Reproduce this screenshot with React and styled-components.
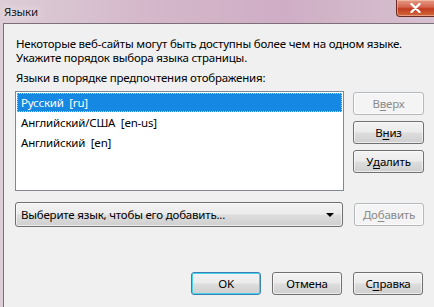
import React from 'react'
import styled, { createGlobalStyle } from 'styled-components'

const GlobalStyle = createGlobalStyle`
    html, body {
        margin: 0;
        padding: 0;
        overflow: hidden;
        background: #f0f0f0;
    }
`

const Window = styled.div`
    width: 434px;
    height: 307px;
    display: flex;
    flex-direction: column;
    background: linear-gradient(90deg, #dccdd6 0%, #d4b7ca 35%, #cfaec5 65%, #d6c0cf 100%);
    font-family: "Noto Sans", "Open Sans", sans-serif;
    font-size: 11.5px;
    letter-spacing: -0.2px;
    color: #000;
    overflow: hidden;
`

const TitleBar = styled.div`
    height: 23px;
    display: flex;
    align-items: flex-start;
    justify-content: space-between;
    flex-shrink: 0;
`

const Title = styled.span`
    margin: 4px 0 0 4px;
    font-size: 11.5px;
    color: #1a1a1a;
    text-shadow: 0 0 6px #efe6ec, 0 0 10px #efe6ec;
`

const CloseButton = styled.div`
    width: 42px;
    height: 17px;
    margin-right: -4px;
    flex-shrink: 0;
    border: 1px solid #6b2b22;
    border-top: none;
    border-radius: 0 0 4px 4px;
    background: linear-gradient(#e59c88 0%, #d4634a 45%, #c23a1f 55%, #d36a3e 100%);
    box-shadow: inset 0 0 0 1px rgba(255, 210, 190, 0.5);
    display: flex;
    align-items: center;
    justify-content: center;
    padding-right: 4px;
    box-sizing: border-box;
`

const Client = styled.div`
    flex: 1;
    margin-left: 3px;
    border-left: 1px solid #7d6f78;
    border-top: 1px solid #7d6f78;
    background: #f0f0f0;
    padding: 13px 10px 0 11px;
    display: flex;
    flex-direction: column;
`

const Description = styled.p`
    margin: 0 0 0 1px;
    line-height: 14px;
    white-space: nowrap;
`

const Label = styled.div`
    margin: 6px 0 0 1px;
    line-height: 14px;
`

const ListRow = styled.div`
    display: flex;
    gap: 9px;
    margin-top: 6px;
`

const ListBox = styled.div`
    width: 329px;
    height: 100px;
    flex-shrink: 0;
    box-sizing: border-box;
    border: 1px solid #828790;
    background: #fff;
    padding: 1px 1px 0;
    display: flex;
    flex-direction: column;
    gap: 1px;
`

const ListItem = styled.div`
    height: 19px;
    line-height: 19px;
    padding-left: 4px;
    white-space: pre;
    color: ${props => (props.selected ? '#fff' : '#000')};
    background: ${props => (props.selected ? '#1588e3' : 'transparent')};
    outline: ${props => (props.selected ? '1px dotted #a9d6ff' : 'none')};
    outline-offset: -1px;
`

const SideButtons = styled.div`
    display: flex;
    flex-direction: column;
    gap: 6px;
    padding-top: 1px;
`

const Button = styled.div`
    width: ${props => props.$width || 71}px;
    height: 23px;
    flex-shrink: 0;
    box-sizing: border-box;
    border: 1px solid ${props => (props.$disabled ? '#b5b9bc' : props.$primary ? '#3c7fb1' : '#707070')};
    border-radius: 3px;
    background: ${props => props.$disabled
        ? '#f4f4f4'
        : 'linear-gradient(#f3f3f3 0%, #ebebeb 48%, #dddddd 52%, #cfcfcf 100%)'};
    box-shadow: ${props => (props.$primary ? 'inset 0 0 0 1px #48d2ec' : 'inset 0 0 0 1px rgba(255,255,255,0.6)')};
    color: ${props => (props.$disabled ? '#8a8a8a' : '#000')};
    display: flex;
    align-items: center;
    justify-content: center;
    line-height: 1;
`

const Key = styled.span`
    text-decoration: underline;
    text-underline-offset: 2px;
`

const AddRow = styled.div`
    display: flex;
    align-items: center;
    gap: 11px;
    margin-top: 11px;
`

const Select = styled.div`
    width: 328px;
    height: 25px;
    flex-shrink: 0;
    box-sizing: border-box;
    border: 1px solid #707070;
    border-radius: 3px;
    background: linear-gradient(#f3f3f3 0%, #ebebeb 48%, #dddddd 52%, #cfcfcf 100%);
    box-shadow: inset 0 0 0 1px rgba(255,255,255,0.6);
    display: flex;
    align-items: center;
    justify-content: space-between;
    padding: 0 8px 0 5px;
`

const Arrow = styled.span`
    width: 0;
    height: 0;
    border-left: 4px solid transparent;
    border-right: 4px solid transparent;
    border-top: 4px solid #000;
`

const Footer = styled.div`
    display: flex;
    justify-content: flex-end;
    gap: 11px;
    margin-top: 45px;
    padding-right: 1px;
`

function App() {
    return (
        <Window>
            <GlobalStyle />
            <TitleBar>
                <Title>Языки</Title>
                <CloseButton>
                    <svg width="11" height="10" viewBox="0 0 11 10">
                        <path d="M1.5 1 L9.5 9 M9.5 1 L1.5 9" stroke="#fff" strokeWidth="2.4" strokeLinecap="round" />
                    </svg>
                </CloseButton>
            </TitleBar>
            <Client>
                <Description>
                    Некоторые веб-сайты могут быть доступны более чем на одном языке.
                    <br />
                    Укажите порядок выбора языка страницы.
                </Description>
                <Label>Языки в порядке предпочтения отображения:</Label>
                <ListRow>
                    <ListBox>
                        <ListItem selected>Русский  [ru]</ListItem>
                        <ListItem>Английский/США  [en-us]</ListItem>
                        <ListItem>Английский  [en]</ListItem>
                    </ListBox>
                    <SideButtons>
                        <Button $disabled>В<Key>в</Key>ерх</Button>
                        <Button>В<Key>н</Key>из</Button>
                        <Button>У<Key>д</Key>алить</Button>
                    </SideButtons>
                </ListRow>
                <AddRow>
                    <Select>
                        <span>Выберите язык, чтобы его добавить...</span>
                        <Arrow />
                    </Select>
                    <Button $disabled $width={70}>До<Key>б</Key>авить</Button>
                </AddRow>
                <Footer>
                    <Button $primary $width={70}>OK</Button>
                    <Button $width={70}>Отмена</Button>
                    <Button $width={70}>С<Key>п</Key>равка</Button>
                </Footer>
            </Client>
        </Window>
    )
}

export default App
